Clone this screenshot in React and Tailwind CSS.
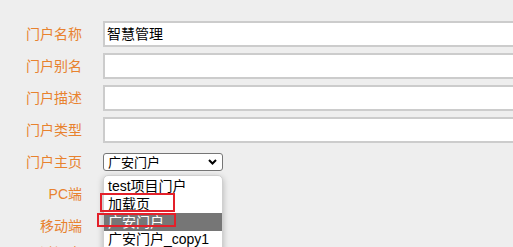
import React from "react";

const font = { fontFamily: '"Liberation Sans", "Noto Sans CJK SC", sans-serif' };

function Row({ label, children, h = "h-[26px]", extra = "" }) {
  return (
    <div className={`flex items-center ${h} ${extra}`}>
      <div className="w-[82px] shrink-0 text-right text-[14px] leading-none text-[#e8822e]">{label}</div>
      <div className="ml-[21px] flex-1 flex items-center h-full">{children}</div>
    </div>
  );
}

function TextInput({ value = "" }) {
  return (
    <div className="w-[460px] shrink-0 h-[26px] bg-white border-2 border-[#cccccc] pl-[2px] flex items-center text-[14px] text-black leading-none">
      {value}
    </div>
  );
}

export default function App() {
  return (
    <div className="relative w-[513px] h-[247px] overflow-hidden bg-[#eeeeee]" style={font}>
      <div className="pt-[21px] flex flex-col gap-[6px]">
        <Row label="门户名称"><TextInput value="智慧管理" /></Row>
        <Row label="门户别名"><TextInput /></Row>
        <Row label="门户描述"><TextInput /></Row>
        <Row label="门户类型"><TextInput /></Row>
        <Row label="门户主页">
          <div className="w-[120px] h-[18px] bg-white border border-[#767676] rounded-[3px] flex items-center justify-between pl-[4px] pr-[5px] text-[13px] text-black leading-none">
            <span>广安门户</span>
            <svg width="9" height="6" viewBox="0 0 9 6"><path d="M1 1 L4.5 4.5 L8 1" stroke="#000" strokeWidth="2" fill="none" /></svg>
          </div>
        </Row>
        <Row label="PC端" />
        <Row label="移动端" />
        <Row label="通过门户" h="h-[14px]" extra="mt-[1px]">
          <span className="text-[14px] leading-none text-black">http://192.168.1.2:8030/30e0d88754d21b7</span>
        </Row>
      </div>

      <div className="absolute left-[103px] top-[175px] w-[120px] h-[90px] bg-white border border-[#d0d0d0] rounded-[5px] shadow-[0_2px_6px_rgba(0,0,0,0.25)] pt-px text-[14px] text-black leading-none">
        <div className="h-[18px] flex items-center pl-[4px]">test项目门户</div>
        <div className="h-[18px] flex items-center pl-[4px]">加载页</div>
        <div className="h-[18px] flex items-center pl-[4px] bg-[#767676] text-white">广安门户</div>
        <div className="h-[18px] flex items-start pt-[1px] pl-[4px]">广安门户_copy1</div>
      </div>

      <div className="absolute left-[100px] top-[193px] w-[75px] h-[19px] border-2 border-[#e3202a]" />
      <div className="absolute left-[97px] top-[213px] w-[79px] h-[14px] border-2 border-[#e3202a]" />
    </div>
  );
}
